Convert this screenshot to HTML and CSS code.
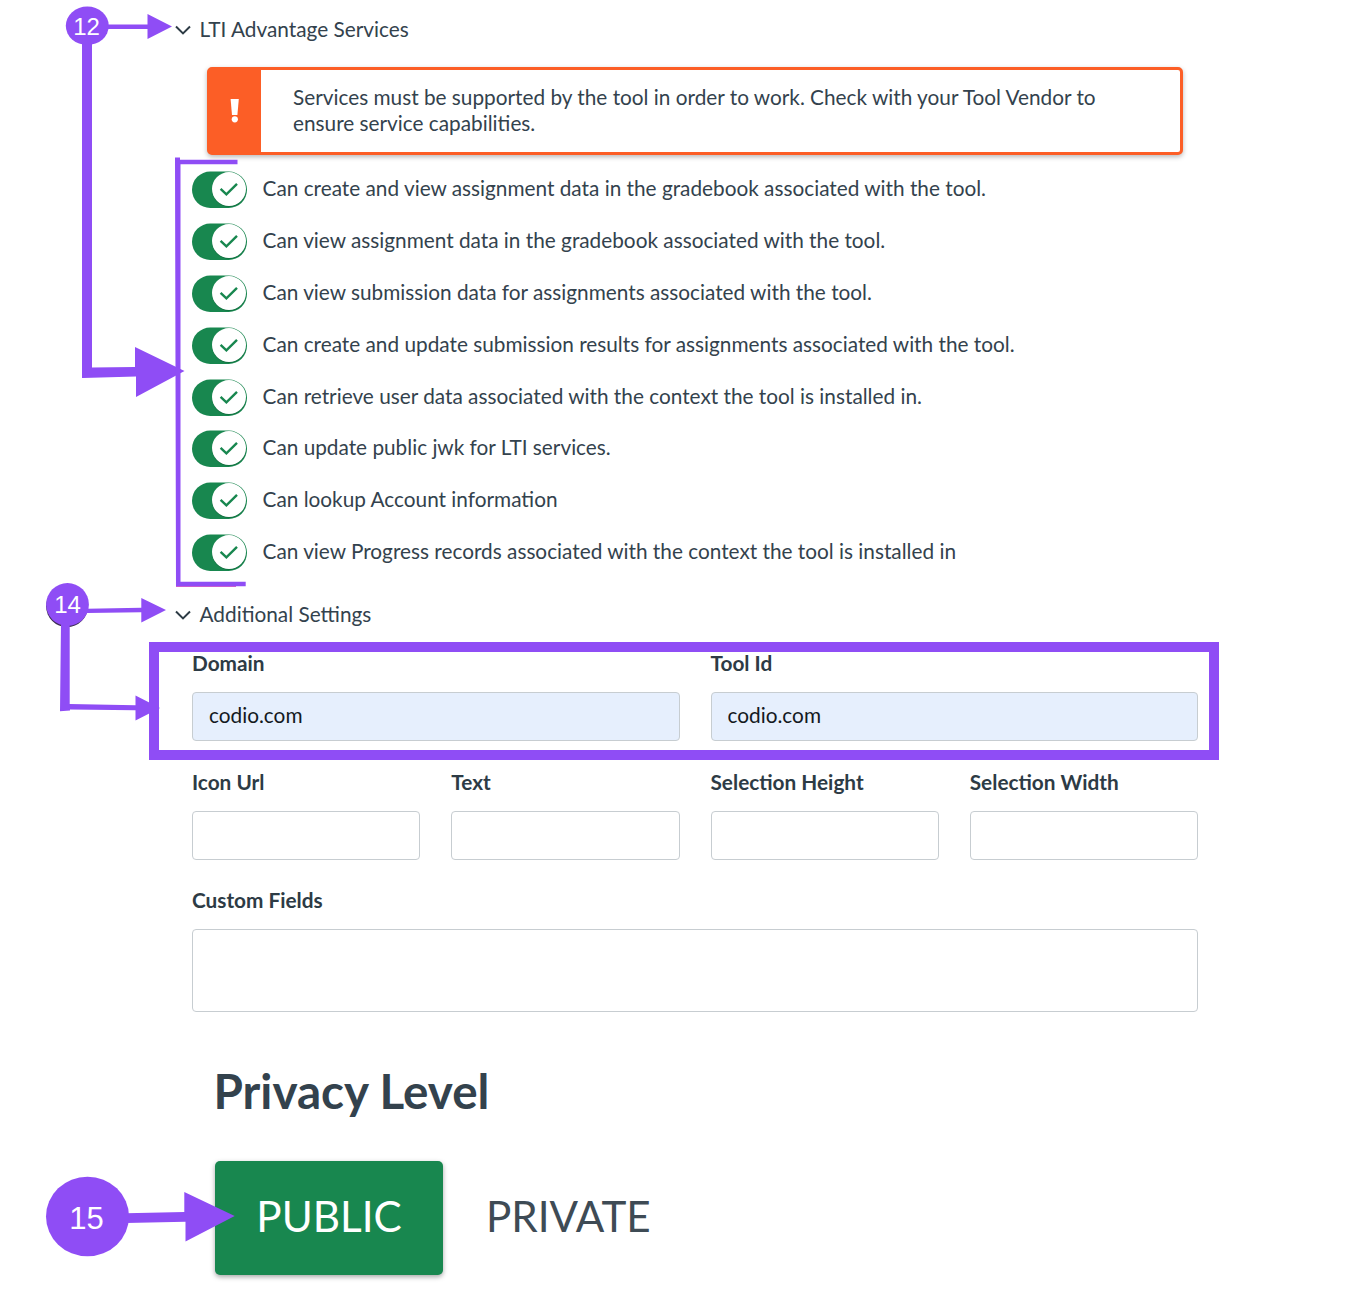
FILE: index.html
```html
<!DOCTYPE html>
<html lang="en">
<head>
<meta charset="utf-8">
<title>LTI key settings</title>
<link rel="stylesheet" href="styles.css">
</head>
<body>
<svg class="defs" width="0" height="0" aria-hidden="true">
  <symbol id="chevron" viewBox="0 0 16 10"><path d="M1 1.5 8 8.4 15 1.5" fill="none" stroke="#2d3b45" stroke-width="2"/></symbol>
  <symbol id="toggle" viewBox="0 0 55 38">
    <rect x="0" y="0.5" width="55" height="36.5" rx="18.25" fill="#18874f"/>
    <circle cx="37" cy="18.8" r="17" fill="#0e6a3b"/>
    <circle cx="37" cy="18.1" r="17" fill="#fff"/>
    <path d="M28.6 17.8 34.4 23.4 45 12.8" fill="none" stroke="#18874f" stroke-width="2.4"/>
  </symbol>
</svg>
<main class="page">
  <section class="services">
    <h2 class="summary"><svg class="chevron"><use href="#chevron"/></svg><span>LTI Advantage Services</span></h2>
    <div class="alert">
      <div class="alert-icon"><svg width="10" height="24" viewBox="0 0 10 24"><path d="M.6 0h8.2L7.4 16H2z" fill="#fff"/><circle cx="4.8" cy="20.3" r="3.1" fill="#fff"/></svg></div>
      <p class="alert-text">Services must be supported by the tool in order to work. Check with your Tool Vendor to ensure service capabilities.</p>
    </div>
    <ul class="toggles">
      <li class="toggle-row"><svg class="toggle"><use href="#toggle"/></svg><span>Can create and view assignment data in the gradebook associated with the tool.</span></li>
      <li class="toggle-row"><svg class="toggle"><use href="#toggle"/></svg><span>Can view assignment data in the gradebook associated with the tool.</span></li>
      <li class="toggle-row"><svg class="toggle"><use href="#toggle"/></svg><span>Can view submission data for assignments associated with the tool.</span></li>
      <li class="toggle-row"><svg class="toggle"><use href="#toggle"/></svg><span>Can create and update submission results for assignments associated with the tool.</span></li>
      <li class="toggle-row"><svg class="toggle"><use href="#toggle"/></svg><span>Can retrieve user data associated with the context the tool is installed in.</span></li>
      <li class="toggle-row"><svg class="toggle"><use href="#toggle"/></svg><span>Can update public jwk for LTI services.</span></li>
      <li class="toggle-row"><svg class="toggle"><use href="#toggle"/></svg><span>Can lookup Account information</span></li>
      <li class="toggle-row"><svg class="toggle"><use href="#toggle"/></svg><span>Can view Progress records associated with the context the tool is installed in</span></li>
    </ul>
  </section>
  <section class="additional">
    <h2 class="summary"><svg class="chevron"><use href="#chevron"/></svg><span>Additional Settings</span></h2>
    <div class="fields">
      <div class="field-row">
        <label class="field">Domain<input class="input filled" value="codio.com"></label>
        <label class="field">Tool Id<input class="input filled" value="codio.com"></label>
      </div>
      <div class="field-row">
        <label class="field">Icon Url<input class="input"></label>
        <label class="field">Text<input class="input"></label>
        <label class="field">Selection Height<input class="input"></label>
        <label class="field">Selection Width<input class="input"></label>
      </div>
      <div class="field-row">
        <label class="field">Custom Fields<textarea class="input area"></textarea></label>
      </div>
    </div>
  </section>
  <section class="privacy">
    <h2 class="privacy-title">Privacy Level</h2>
    <div class="privacy-options">
      <button class="option selected">PUBLIC</button>
      <button class="option">PRIVATE</button>
    </div>
  </section>
</main>
<svg class="callouts" width="1352" height="1312" viewBox="0 0 1352 1312">
  <g fill="#8f4df5">
    <!-- step 12 -->
    <path d="M82 36H92V367.6L135 367V347L184.5 371 136 397V376.5L83 378H82Z"/>
    <path d="M107 24.4H147.5V14L172 26.5 147.5 39V29H107Z"/>
    <ellipse cx="87.3" cy="25.8" rx="21.5" ry="19.2"/>
    <path d="M176 586.3H236" stroke="#d43bb5" stroke-width="1"/>
    <path d="M175 157.5H180V159.8H237.5V164.3H180.5V581.8H245.7V586.3H176Z"/>
    <!-- step 14 -->
    <circle cx="67" cy="606.3" r="20.9" fill="#3b2b50"/>
    <path d="M61 622H69.7V704L135.5 705.3V695.5L160 708 135.5 720.5V710.2L70 709.5V710.5L60 711.2Z"/>
    <path d="M87 608.7 141.3 607.8V598L166 610 141.3 622.5V612.3L87 613Z"/>
    <circle cx="67.5" cy="604.5" r="21.4"/>
    <path d="M149 642H1219V760H149ZM159 652V750H1209V652Z" fill-rule="evenodd"/>
    <!-- step 15 -->
    <path d="M126 1213.3 184.3 1212V1192L234.7 1216 185.5 1241.5V1221.8L126 1223Z"/>
    <ellipse cx="87.5" cy="1216.5" rx="41.5" ry="39.8"/>
  </g>
  <g class="callout-number">
    <text x="86.5" y="35" font-size="24">12</text>
    <text x="67.5" y="613" font-size="24">14</text>
    <text x="86.5" y="1229" font-size="31">15</text>
  </g>
</svg>
</body>
</html>
```
FILE: styles.css
```css
* { box-sizing: border-box; }
body {
  margin: 0;
  width: 1352px;
  height: 1312px;
  position: relative;
  overflow: hidden;
  background: #fff;
  color: #33424d;
  font: 400 20.79px/26px Lato, sans-serif;
}
.defs { position: absolute; }
.page { padding: 16px 154px 0 175.5px; }
.summary {
  display: flex;
  align-items: center;
  gap: 8px;
  margin: 0;
  font-size: 20.8px;
  font-weight: 400;
}
.chevron { width: 16px; height: 10px; margin: 2px 0 0 -.5px; }
.summary span { margin-left: .5px; }
.alert {
  display: flex;
  width: 976.5px;
  height: 88px;
  margin: 25px 0 0 31px;
  border: 3px solid #fc5e26;
  border-radius: 5px;
  background: #fff;
  box-shadow: 0 2px 5px rgba(0, 0, 0, .28);
}
.alert-icon {
  display: flex;
  align-items: center;
  justify-content: center;
  width: 51.5px;
  padding: 0 0 1px;
  background: #fc5e26;
}
.alert-text { width: 830px; margin: 13.5px 0 0 32px; }
.toggles {
  display: flex;
  flex-direction: column;
  gap: 13.9px;
  margin: 16px 0 0 16.5px;
  padding: 0;
  list-style: none;
}
.toggle-row { display: flex; gap: 15.5px; height: 38px; line-height: 34px; }
.toggle { width: 55px; height: 38px; flex: none; }
.additional { padding-top: 29px; }
.fields {
  display: flex;
  flex-direction: column;
  gap: 27.5px;
  width: 1006px;
  margin: 23px 0 0 16.5px;
}
.field-row { display: flex; gap: 31px; }
.field {
  display: flex;
  flex: 1 1 0;
  flex-direction: column;
  gap: 16px;
  min-width: 0;
  color: #2d3b45;
  font-weight: 700;
}
.input {
  display: block;
  width: 100%;
  height: 49px;
  padding: 0 16px 4px;
  border: 1px solid #c7cdd1;
  border-radius: 4px;
  background: #fff;
  color: #14191e;
  font: 400 20.8px/26px Lato, sans-serif;
}
.filled { background: #e6effd; }
.area { height: 83px; resize: none; }
.privacy { padding: 49px 0 0 39.5px; }
.privacy-title {
  margin: 0 0 0 -1.5px;
  font-size: 47.6px;
  line-height: 60px;
  font-weight: 700;
}
.privacy-options { display: flex; margin-top: 40px; }
.option {
  height: 114px;
  padding: 0 43px 4px;
  border: 0;
  background: none;
  color: #3e4b55;
  font: 400 42.2px/50px Lato, sans-serif;
}
.selected {
  width: 228px;
  padding: 0 0 4px;
  border-radius: 5px;
  background: #18874f;
  color: #fff;
  box-shadow: 0 2px 5px rgba(0, 0, 0, .35);
}
.callouts { position: absolute; left: 0; top: 0; pointer-events: none; }
.callout-number { fill: #fff; font-family: "Liberation Sans", sans-serif; text-anchor: middle; }
```
